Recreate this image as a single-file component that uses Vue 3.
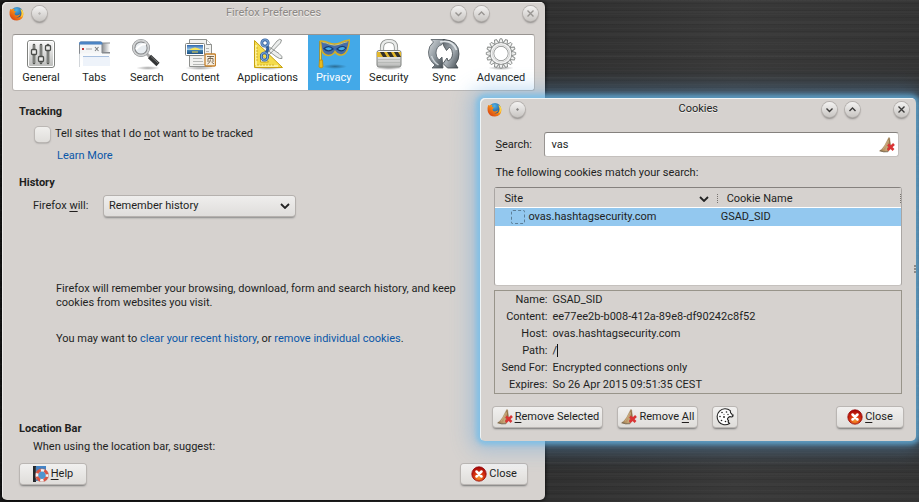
<script setup>
import { ref } from 'vue'

const tabs = [
  { id: 'general', label: 'General' },
  { id: 'tabs', label: 'Tabs' },
  { id: 'search', label: 'Search' },
  { id: 'content', label: 'Content' },
  { id: 'applications', label: 'Applications' },
  { id: 'privacy', label: 'Privacy' },
  { id: 'security', label: 'Security' },
  { id: 'sync', label: 'Sync' },
  { id: 'advanced', label: 'Advanced' }
]
const active = ref('privacy')
const doNotTrack = ref(false)
const historyMode = ref('Remember history')
const query = ref('vas')

const details = [
  { label: 'Name:', value: 'GSAD_SID' },
  { label: 'Content:', value: 'ee77ee2b-b008-412a-89e8-df90242c8f52' },
  { label: 'Host:', value: 'ovas.hashtagsecurity.com' },
  { label: 'Path:', value: '/', caret: true },
  { label: 'Send For:', value: 'Encrypted connections only' },
  { label: 'Expires:', value: 'So 26 Apr 2015 09:51:35 CEST' }
]
const teeth = Array.from({ length: 16 }, (_, i) => i * 22.5)
</script>

<template>
  <svg class="defs" aria-hidden="true">
    <defs>
      <linearGradient id="gMetal" x1="0" y1="0" x2="0" y2="1">
        <stop offset="0" stop-color="#fafafa" /><stop offset="1" stop-color="#b9bab8" />
      </linearGradient>
      <linearGradient id="gSync" x1="0" y1="0" x2="1" y2="1">
        <stop offset="0" stop-color="#596168" /><stop offset=".5" stop-color="#aab2b8" /><stop offset="1" stop-color="#3f474d" />
      </linearGradient>
      <linearGradient id="gSync2" x1="0" y1="0" x2="1" y2="1">
        <stop offset="0" stop-color="#d9dee1" /><stop offset=".5" stop-color="#8b949b" /><stop offset="1" stop-color="#3b4348" />
      </linearGradient>
      <linearGradient id="gFade" x1="0" y1="0" x2="0" y2="1">
        <stop offset="0" stop-color="#dfe3e8" /><stop offset="1" stop-color="#fff" stop-opacity="0" />
      </linearGradient>
      <linearGradient id="gSide" x1="0" y1="0" x2="1" y2="0">
        <stop offset="0" stop-color="#8d8f92" /><stop offset="1" stop-color="#fff" />
      </linearGradient>
      <linearGradient id="gSky" x1="0" y1="0" x2="0" y2="1">
        <stop offset="0" stop-color="#2c65ac" /><stop offset=".55" stop-color="#a8d2ee" /><stop offset=".6" stop-color="#3f7fae" /><stop offset="1" stop-color="#1e5285" />
      </linearGradient>
      <linearGradient id="gFox" x1="1" y1="0" x2="0" y2="1">
        <stop offset="0" stop-color="#ffd83a" /><stop offset=".45" stop-color="#f58a16" /><stop offset="1" stop-color="#cf2d12" />
      </linearGradient>
      <radialGradient id="gGlobe" cx=".45" cy=".25" r=".8">
        <stop offset="0" stop-color="#4fb3e6" /><stop offset="1" stop-color="#123a7c" />
      </radialGradient>
      <linearGradient id="gBroom" x1="0" y1="0" x2="1" y2="0">
        <stop offset="0" stop-color="#9a7848" /><stop offset=".6" stop-color="#c4a172" /><stop offset="1" stop-color="#876538" />
      </linearGradient>
      <radialGradient id="gClose" cx=".5" cy=".75" r=".7">
        <stop offset="0" stop-color="#f49a2c" /><stop offset=".5" stop-color="#d8350f" /><stop offset="1" stop-color="#a80808" />
      </radialGradient>
      <radialGradient id="gShadow">
        <stop offset="0" stop-color="#000" stop-opacity=".35" /><stop offset="1" stop-color="#000" stop-opacity="0" />
      </radialGradient>
    </defs>

    <symbol id="i-general" viewBox="0 0 32 32">
      <rect x="2.500" y="2.500" width="27" height="27" rx="2.500" fill="url(#gMetal)" stroke="#7f817e" />
      <rect x="3.500" y="3.500" width="25" height="25" rx="1.500" fill="none" stroke="#fff" />
      <path d="M9 7v18M16 7v18M23 7v18" stroke="#555753" stroke-width="2.600" stroke-linecap="round" />
      <path d="M9 7v18M16 7v18M23 7v18" stroke="#a5a7a4" />
      <g fill="#eeeeec" stroke="#4b4d4a" stroke-width="1.300">
        <rect x="6.500" y="11.500" width="5" height="5" rx="1" /><rect x="13.500" y="18.500" width="5" height="5" rx="1" /><rect x="20.500" y="7.500" width="5" height="5" rx="1" />
      </g>
    </symbol>

    <symbol id="i-tabs" viewBox="0 0 32 32">
      <rect x="24" y="5" width="8" height="10" fill="url(#gSide)" />
      <path d="M24 5h8M24 14.500h8" stroke="#8a8c8f" />
      <path d="M1 6q0-2 2-2h19q2 0 2 2v9h8v12H1z" fill="url(#gFade)" />
      <path d="M2 7h21v8H2z" fill="#f4f5f6" />
      <path d="M1.500 16V5.500Q1.500 4 3 4h19.500q1.500 0 1.500 1.500V15h8" fill="none" stroke="#85898e" />
      <path d="M1 6.500q0-3 2-3h19.500q2 0 2 3z" fill="#4c84c4" />
      <path d="M1.500 15v14" stroke="#a5adb6" stroke-opacity=".5" />
      <path d="M5 19h27v9H5z" fill="#e7eef8" opacity=".7" /><path d="M5 18.500h26" stroke="#a8c0df" />
      <rect x="4" y="10" width="2" height="2" fill="#c0393b" /><path d="M8 11h6" stroke="#b5b8bb" stroke-width="1.200" />
      <path d="M17 9l3.500 4m0-4L17 13" stroke="#7c7f82" stroke-width="1.100" />
    </symbol>

    <symbol id="i-search" viewBox="0 0 32 32">
      <ellipse cx="17" cy="30" rx="12" ry="2" fill="url(#gShadow)" />
      <path d="M16 16l4 4" stroke="#aaa" stroke-width="3" />
      <path d="M18.500 18.500l8.500 8" stroke="#333536" stroke-width="4.600" />
      <path d="M20 18.500l7 6.500" stroke="#777" stroke-width="1" />
      <circle cx="10" cy="10" r="7.300" fill="#e8edf1" stroke="#858789" stroke-width="3.400" />
      <circle cx="10" cy="10" r="7.500" fill="none" stroke="#cfd1d2" stroke-width="1.800" />
      <path d="M5 11.500q5-6 10-5" stroke="#fff" stroke-width="2" fill="none" />
    </symbol>

    <symbol id="i-content" viewBox="0 0 32 32">
      <ellipse cx="16" cy="30" rx="15" ry="2" fill="url(#gShadow)" />
      <path d="M5.500 1.500h17l5 5v22h-22z" fill="#f1f1ef" stroke="#8f918e" />
      <path d="M22.500 1.500v5h5" fill="#fff" stroke="#8f918e" />
      <path d="M9 20.500h9M9 23.500h10M9 26.500h12" stroke="#b5b7b5" />
      <path d="M22 10.500h3M22 13.500h3" stroke="#b5b7b5" />
      <rect x="1.500" y="5.500" width="19" height="12" rx="1" fill="#fff" stroke="#80837f" />
      <rect x="3" y="7" width="16" height="9" fill="url(#gSky)" />
      <path d="M5 12q6-5 12 0z" fill="#f6e35c" /><path d="M8 14h6" stroke="#ecd44a" />
      <rect x="21" y="16" width="10.500" height="12" rx="1" fill="#f8efe0" stroke="#c5812d" stroke-width="1.300" />
      <path d="M23 18.500h7M26.500 18.500l-.7 2M24 24v-3.500h5V24M26.500 21.500q0 3-3 4.500M27.500 24l2.500 2" stroke="#5d4b32" stroke-width=".8" fill="none" />
    </symbol>

    <symbol id="i-applications" viewBox="0 0 32 32">
      <ellipse cx="16" cy="30" rx="15" ry="2" fill="url(#gShadow)" />
      <path d="M2.500 2.500v27h28zM8.500 16v8h8z" fill="#f5dc4b" fill-rule="evenodd" stroke="#c7a20f" />
      <path d="M4 28h22M4 7v20" stroke="#fff6b0" stroke-width="1.500" />
      <path d="M6 28v-2m3 2v-2m3 2v-2m3 2v-2m3 2v-2m3 2v-2M4 10h2M4 13h2M4 16h2M4 19h2M4 22h2" stroke="#c9a51c" stroke-width=".8" />
      <path d="M15 15.500L25 3q3-3 4.500-1 0 3-4 6L17 17zM15 7.500l12 8q4 3 3 5-2 1-6-2L14 11z" fill="#eceeed" stroke="#8b8e8c" stroke-width=".9" />
      <g fill="none" stroke="#315f9e" stroke-width="2.800"><circle cx="13" cy="5" r="3.200" /><ellipse cx="12.500" cy="18.500" rx="3.200" ry="3.700" /><path d="M15 8l1 3-2 4" /></g>
      <g fill="none" stroke="#7faada" stroke-width="1.100"><circle cx="13" cy="5" r="3.200" /><ellipse cx="12.500" cy="18.500" rx="3.200" ry="3.700" /></g>
    </symbol>

    <symbol id="i-privacy" viewBox="0 0 32 32">
      <ellipse cx="17" cy="28.500" rx="12" ry="2.500" fill="url(#gShadow)" />
      <path d="M2.500 3v20" stroke="#b58d11" stroke-width="2.500" /><path d="M2.500 3v20" stroke="#f4db4d" />
      <path d="M1.500 22h3l.5 7q-2 2-4 0z" fill="#e9b91c" stroke="#bd8a08" stroke-width=".8" />
      <path d="M2.500 3q5 0 8 1.700 6 2.500 12 0 4-2 9-2.700-.5 5-2 9.500-2 5-6 5.500-4 .5-6.500-3.500-2 4-7 4-5.500-1-6.500-6.500-.5-4-1-8z" fill="#466da9" stroke="#d5ae25" stroke-width="1.500" />
      <path d="M4.500 4.500q4 0 6 1.500 6 2.500 12 0 3-1.500 7-2.200" stroke="#f9e773" stroke-width=".7" fill="none" />
      <path d="M6 10.500q5-4 9 .5-5 4-9-.5zM19 11q5-4.500 9-1-4 5-9 1z" fill="#43ace8" stroke="#173c70" stroke-width="1.200" />
    </symbol>

    <symbol id="i-security" viewBox="0 0 32 32">
      <ellipse cx="16" cy="30" rx="14" ry="2" fill="url(#gShadow)" />
      <path d="M9 14V9.500q0-6.500 7-6.500t7 6.500V14" fill="none" stroke="#8b8e8c" stroke-width="4.200" />
      <path d="M9 14V9.500q0-6.500 7-6.500t7 6.500V14" fill="none" stroke="#e9ebea" stroke-width="2.600" />
      <rect x="4" y="12.500" width="24" height="16.500" rx="2" fill="url(#gMetal)" stroke="#7e817f" />
      <path d="M4 14h24v5H4z" fill="#e2b72b" />
      <path d="M7 14h4l3 5h-4zM14 14h4l3 5h-4zM21 14h4l3 5h-4z" fill="#32312b" />
      <path d="M5 21.500h22M5 24.500h22M5 27.500h22" stroke="#b2b5b3" stroke-width=".8" />
    </symbol>

    <symbol id="i-sync" viewBox="0 0 32 32">
      <path d="M3 1.500h14l-3 5Q8 8.500 8 15q0 4 3 7l3-3 1 11H4l3-3Q.5 22 .5 14 .5 8 5.500 4z" fill="url(#gSync2)" stroke="#50585e" stroke-width=".8" />
      <path d="M15 1.500Q31 2 31 16q0 6-3.500 10l2.500 4H19.500L15 25.500l4-5.500 1 3q4.500-2 4.500-7.500 0-4-3-6.500l-3 3.500-3-5z" fill="url(#gSync)" stroke="#3f464b" stroke-width=".8" />
      <path d="M12 4q12-3 16.500 8" stroke="#dfe4e7" stroke-width="1.800" fill="none" />
      <path d="M3.500 18q2 6 7 9" stroke="#cdd3d7" stroke-width="1.400" fill="none" />
    </symbol>

    <symbol id="i-advanced" viewBox="0 0 32 32">
      <ellipse cx="16" cy="30" rx="13" ry="2" fill="url(#gShadow)" />
      <g fill="#f1f2f1" stroke="#868988" stroke-width=".9">
        <path v-for="a in teeth" :key="a" d="M13.700 5.500l1.300-4.700h2l1.300 4.700" :transform="`rotate(${a} 16 15.500)`" />
      </g>
      <circle cx="16" cy="15.500" r="9" fill="none" stroke="#868988" stroke-width="4.400" />
      <circle cx="16" cy="15.500" r="9" fill="none" stroke="#f4f4f4" stroke-width="3" />
      <circle cx="16" cy="15.500" r="8.600" fill="none" stroke="#cbcdcc" stroke-width=".8" />
    </symbol>

    <symbol id="i-firefox" viewBox="0 0 16 16">
      <circle cx="8.500" cy="7.500" r="6.500" fill="url(#gGlobe)" />
      <path d="M1.200 3.200Q2 3.800 3 3.500 4.500 2.700 6 3.200 5 4.200 5.300 5.300L7.500 5.800 5.800 7.600Q6 10 8.500 10q2-.2 3.500-1.200Q11 12 7.500 11.800 11 13.500 13 9.500 13.800 6 12 3.200 15.300 4.500 15.500 8.500 15 15 8.500 15.500 2 15.500.7 9.500.3 6 1.200 3.200z" fill="url(#gFox)" />
      <path d="M13.500 4q2 4 0 7.500" fill="none" stroke="#ffe14e" />
    </symbol>

    <symbol id="i-broom" viewBox="0 0 16 16">
      <path d="M9.800.5l.8.4 1 7.600-2.300 6q-4.500 1-8.800-.6 3-1.600 5.300-5.600z" fill="url(#gBroom)" stroke="#8a6a3d" stroke-width=".4" />
      <path d="M9.500 3L4 12.500M9.700 4L7 13.500" stroke="#d3b789" stroke-width=".6" />
      <path d="M1 13.500q3 2 8 1.300" stroke="#555" stroke-opacity=".5" fill="none" />
      <path d="M9 7.500l5.500 5.500M15 7l-6.300 6" stroke="#d93434" stroke-width="2.600" />
    </symbol>

    <symbol id="i-close" viewBox="0 0 16 16">
      <circle cx="8" cy="8" r="7.200" fill="url(#gClose)" stroke="#970707" stroke-width=".8" />
      <path d="M5.500 5.500l5 5M10.500 5.500l-5 5" stroke="#fff" stroke-width="2.500" stroke-linecap="round" />
    </symbol>

    <symbol id="i-help" viewBox="0 0 16 16">
      <path d="M0 0h13v15H0z" fill="#4384c6" /><path d="M0 0h3v16H0z" fill="#23262b" /><path d="M3 1v14" stroke="#777c83" stroke-width=".6" />
      <circle cx="9" cy="9.300" r="5.200" fill="#4f94cf" stroke="#f1f2f2" stroke-width="2.800" />
      <circle cx="9" cy="9.300" r="5.200" fill="none" stroke="#dc5342" stroke-width="2.800" stroke-dasharray="4.600 3.568" stroke-dashoffset="-1.700" />
      <circle cx="9" cy="9.300" r="6.600" fill="none" stroke="#b0463a" stroke-width=".4" />
    </symbol>

    <symbol id="i-cookie" viewBox="0 0 18 18">
      <path d="M14.300 2.700A8 8 0 1 0 13.500 15.500Q11.500 14 12.500 12.500q-2-1.500 0-3 1-1.500 3-.5 1.800-.3 1.500-2-1 .5-1.200-1Q14 5 14.300 2.700z" fill="#fff" stroke="#222" stroke-width="1.100" />
      <g fill="#222"><circle cx="6" cy="4.500" r=".8" /><circle cx="10.500" cy="4" r=".8" /><circle cx="12" cy="6.500" r=".7" /><circle cx="4" cy="8.500" r=".8" /><circle cx="8" cy="9" r=".9" /><circle cx="5.500" cy="12.500" r=".8" /><circle cx="9.500" cy="13.500" r=".8" /><circle cx="8" cy="6.300" r=".5" /></g>
    </symbol>
  </svg>

  <main class="desktop">
    <section class="window prefs" aria-label="Firefox Preferences">
      <header class="titlebar inactive">
        <svg class="app-icon"><use href="#i-firefox" /></svg>
        <button class="round" aria-label="Window menu"><svg viewBox="0 0 15 15"><circle cx="7.500" cy="7.500" r=".3" /></svg></button>
        <h1>Firefox Preferences</h1>
        <button class="round" aria-label="Minimize"><svg viewBox="0 0 15 15"><path d="M4.500 6.500l3 3 3-3" /></svg></button>
        <button class="round" aria-label="Maximize"><svg viewBox="0 0 15 15"><path d="M4.500 9l3-3 3 3" /></svg></button>
        <button class="round last" aria-label="Close window"><svg viewBox="0 0 15 15"><path d="M4.500 4.500l6 6m0-6l-6 6" /></svg></button>
      </header>

      <nav class="toolbar">
        <button v-for="t in tabs" :key="t.id" class="tab" :class="{ active: active === t.id }" @click="active = t.id">
          <svg class="tab-icon"><use :href="`#i-${t.id}`" /></svg>
          <span>{{ t.label }}</span>
        </button>
      </nav>

      <div class="pane">
        <h2>Tracking</h2>
        <div class="check-row">
          <input id="dnt" v-model="doNotTrack" type="checkbox" />
          <label for="dnt">Tell sites that I do <u>n</u>ot want to be tracked</label>
        </div>
        <p class="learn"><a href="#">Learn More</a></p>

        <h2 class="history">History</h2>
        <div class="select-row">
          <label for="mode">Firefox <u>w</u>ill:</label>
          <span class="select">
            <select id="mode" v-model="historyMode">
              <option>Remember history</option>
              <option>Never remember history</option>
              <option>Use custom settings for history</option>
            </select>
            <svg class="chevron" viewBox="0 0 10 6"><path d="M1 1l4 4 4-4" /></svg>
          </span>
        </div>
        <p class="info">Firefox will remember your browsing, download, form and search history, and keep cookies from websites you visit.</p>
        <p class="actions">You may want to <a href="#">clear your recent history</a>, or <a href="#">remove individual cookies</a>.</p>

        <h2 class="location">Location Bar</h2>
        <p class="suggest">When using the location bar, suggest:</p>
      </div>

      <footer class="prefs-footer">
        <button class="btn wide"><svg class="btn-icon"><use href="#i-help" /></svg><span><u>H</u>elp</span></button>
        <button class="btn wide"><svg class="btn-icon"><use href="#i-close" /></svg><span>Close</span></button>
      </footer>
    </section>

    <section class="window cookies" aria-label="Cookies">
      <header class="titlebar">
        <svg class="app-icon"><use href="#i-firefox" /></svg>
        <button class="round" aria-label="Window menu"><svg viewBox="0 0 15 15"><circle cx="7.500" cy="7.500" r=".3" /></svg></button>
        <h1>Cookies</h1>
        <button class="round" aria-label="Minimize"><svg viewBox="0 0 15 15"><path d="M4.500 6.500l3 3 3-3" /></svg></button>
        <button class="round" aria-label="Maximize"><svg viewBox="0 0 15 15"><path d="M4.500 9l3-3 3 3" /></svg></button>
        <button class="round last" aria-label="Close window"><svg viewBox="0 0 15 15"><path d="M4.500 4.500l6 6m0-6l-6 6" /></svg></button>
      </header>

      <div class="search-row">
        <label for="q"><u>S</u>earch:</label>
        <div class="field">
          <input id="q" v-model="query" type="text" />
          <button class="clear" aria-label="Clear search" @click="query = ''"><svg class="btn-icon"><use href="#i-broom" /></svg></button>
        </div>
      </div>
      <p class="match">The following cookies match your search:</p>

      <div class="tree">
        <table>
          <thead>
            <tr>
              <th class="site"><div><span>Site</span><svg class="chevron" viewBox="0 0 10 6"><path d="M1 1l4 4 4-4" /></svg></div></th>
              <th class="name"><div>Cookie Name</div></th>
            </tr>
          </thead>
          <tbody>
            <tr>
              <td><div class="host"><i class="placeholder"></i>ovas.hashtagsecurity.com</div></td>
              <td>GSAD_SID</td>
            </tr>
          </tbody>
        </table>
      </div>

      <dl class="details">
        <template v-for="d in details" :key="d.label">
          <dt>{{ d.label }}</dt>
          <dd>{{ d.value }}<i v-if="d.caret" class="caret"></i></dd>
        </template>
      </dl>

      <footer class="cookie-footer">
        <button class="btn selected"><svg class="btn-icon"><use href="#i-broom" /></svg><span><u>R</u>emove Selected</span></button>
        <button class="btn all"><svg class="btn-icon"><use href="#i-broom" /></svg><span>Remove <u>A</u>ll</span></button>
        <button class="btn" aria-label="Cookie settings"><svg class="cookie-icon"><use href="#i-cookie" /></svg></button>
        <button class="btn wide end"><svg class="btn-icon"><use href="#i-close" /></svg><span><u>C</u>lose</span></button>
      </footer>
      <i class="grip"></i>
    </section>
  </main>
</template>

<style>
body { margin: 0; background: #2c2c2c; }
</style>

<style scoped>
* { box-sizing: border-box; }
.defs { position: absolute; width: 0; height: 0; }
.desktop {
  position: relative;
  min-height: 100vh;
  overflow: hidden;
  font: 11px/14px Roboto, "Open Sans", sans-serif;
  color: #221f1e;
  background:
    repeating-linear-gradient(180deg, rgba(255, 255, 255, .02) 0 1px, transparent 1px 3px, rgba(0, 0, 0, .07) 3px 4px, transparent 4px 7px),
    repeating-linear-gradient(180deg, rgba(255, 255, 255, .02) 0 2px, transparent 2px 11px),
    linear-gradient(90deg, #181818 0, #303030 60%, #393939 80%, #343434 100%);
}
button, input, select { font: inherit; color: inherit; }
button { padding: 0; border: 0; background: none; }
h1, h2, p, dl, dd { margin: 0; font-size: 11px; }
h1, th { font-weight: 400; }
a { color: #0a57a8; text-decoration: none; }
u { text-decoration: underline; text-underline-offset: 2px; }
.window { position: absolute; display: flex; flex-direction: column; background: #d6d2cf; border-radius: 5px; }
.prefs { top: 2px; left: 2px; width: 59.1%; box-shadow: inset 1px 1px 0 #eceae8, 0 0 4px #000; }
.cookies {
  top: 98px; right: 3px; width: 47.4%;
  box-shadow: inset 1px 1px 0 #eff4f6, 0 0 4px 4px rgba(105, 190, 238, .6), 0 0 20px 9px rgba(95, 165, 225, .42);
}
.titlebar { display: flex; align-items: center; gap: 8px; height: 22px; padding: 0 7px; }
.titlebar h1 { flex: 1; text-align: center; padding-left: 49px; text-shadow: 0 1px 0 #f0eeec; }
.inactive h1 { color: #8c8885; }
.app-icon { width: 15px; height: 15px; flex: none; }
.round {
  width: 15px; height: 15px; flex: none; border-radius: 50%;
  background: linear-gradient(#f3f2f1, #c9c6c3);
  box-shadow: 0 0 0 1px #b5b1ae, 0 2px 2px rgba(0, 0, 0, .35);
}
.round svg { display: block; width: 15px; height: 15px; fill: none; stroke: #3b3a39; stroke-width: 1.4; }
.inactive .round svg { stroke: #989592; }
.round.last { margin-left: 26px; }
.toolbar {
  display: grid; grid-template-columns: 54fr 52fr 53fr 54fr 80fr 52fr 58fr 52fr 62fr;
  margin: 10px 10px 0; padding: 0 2px 0 1px; height: 57px;
  background: #fff; border: 1px solid #bab6b3; border-top-color: #989491; border-radius: 3px;
}
.tab { display: flex; flex-direction: column; align-items: center; gap: 1px; padding-top: 3px; white-space: nowrap; }
.tab.active { background: #43a9e8; color: #fff; }
.tab-icon { width: 32px; height: 32px; }
.pane { padding: 14px 17px 0; }
.check-row { display: flex; align-items: center; gap: 5px; margin: 6px 0 0 16px; }
.check-row input {
  appearance: none; width: 15px; height: 15px; margin: 2px 0 1px; border-radius: 4px;
  background: linear-gradient(#f0efed, #e0dedb); box-shadow: 0 0 0 1px #bbb7b4, 0 1px 2px #777;
}
.check-row input:checked { background: #43a9e8; }
.learn { margin: 6px 0 0 38px; }
.history { margin-top: 13px; }
.select-row { display: flex; align-items: center; margin: 6px 0 0 14px; }
.select-row label { flex: 0 0 71px; }
.select { position: relative; flex: 0 0 191px; }
.select select {
  appearance: none; display: block; width: 100%; height: 20px; padding: 0 24px 0 5px; border: 0; border-radius: 3px;
  background: linear-gradient(#efeeed, #dfdddb); box-shadow: 0 0 0 1px #b5b1ae, 0 2px 2px #888;
}
.chevron { width: 10px; height: 6px; fill: none; stroke: #222; stroke-width: 1.8; }
.select .chevron { position: absolute; right: 5px; top: 7px; pointer-events: none; }
.info { margin: 66px 52px 0 37px; }
.actions { margin: 22px 0 0 37px; }
.location { margin-top: 76px; }
.suggest { margin: 4px 0 0 14px; }
.prefs-footer { display: flex; justify-content: space-between; padding: 10px 18px 16px; }
.btn {
  display: flex; align-items: center; justify-content: center; gap: 2px; height: 20px; padding: 0 3px; border-radius: 3px; white-space: nowrap;
  background: linear-gradient(#f1f0ef, #dfddda); box-shadow: 0 0 0 1px #bab6b3, 0 2px 2px #777;
}
.btn.wide { min-width: 66px; }
.btn.selected { min-width: 109px; }
.btn.all { min-width: 79px; }
.btn-icon { width: 16px; height: 16px; flex: none; display: block; }
.cookie-icon { width: 18px; height: 18px; }
.search-row { display: flex; align-items: center; margin: 12px 17px 0 15px; }
.search-row label { flex: 0 0 49px; }
.field {
  display: flex; flex: 1; align-items: center; height: 25px; padding: 0 3px 0 6px;
  background: #fff; border: 1px solid #c4c0bd; border-top-color: #85817e; border-left-color: #989491; border-radius: 3px;
}
.field input { flex: 1; min-width: 0; padding: 0; border: 0; outline: 0; background: none; }
.match { margin: 9px 15px 0; }
.tree { height: 99px; margin: 7px 14px 0; background: #fff; border: 1px solid #aaa6a3; border-top-color: #85817e; border-bottom-color: #c5c1be; border-radius: 3px; }
table { width: 100%; border-collapse: collapse; table-layout: fixed; }
th { height: 19px; padding: 0; text-align: left; background: #d6d2cf; border-bottom: 1px solid #fff; }
th.site { width: 54.800%; }
th div { position: relative; display: flex; align-items: center; padding: 4px 0 0 9px; }
th div::after { content: ""; position: absolute; right: 0; top: 6px; height: 9px; border-right: 1px dotted #77736f; }
.site div { justify-content: space-between; padding-right: 9px; }
tbody tr { background: #93c8ef; }
td { height: 19px; padding: 0 0 0 3px; }
.host { display: flex; align-items: center; gap: 3px; padding-left: 13px; }
.placeholder { width: 14px; height: 14px; border: 1px dashed #5d7f98; border-radius: 2px; }
.details {
  display: grid; grid-template-columns: 52px 1fr; column-gap: 5px; grid-auto-rows: 17px; align-items: center;
  margin: 4px 14px 0; padding: 0; border: 1px solid #98948a;
}
.details dt { text-align: right; }
.details dd { display: flex; align-items: center; }
.caret { width: 1px; height: 13px; background: #111; }
.cookie-footer { display: flex; gap: 16px; margin: 13px 13px 14px; }
.end { margin-left: auto; }
.grip { position: absolute; right: 0; top: 167px; height: 8px; border-right: 2px dotted #8f8b88; }
</style>
